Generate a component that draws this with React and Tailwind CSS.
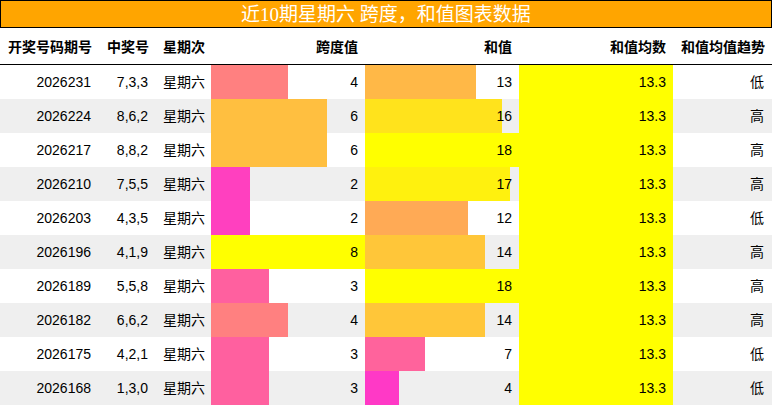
const rows = [
  ['2026231', '7,3,3', 4, 13, '低'],
  ['2026224', '8,6,2', 6, 16, '高'],
  ['2026217', '8,8,2', 6, 18, '高'],
  ['2026210', '7,5,5', 2, 17, '高'],
  ['2026203', '4,3,5', 2, 12, '低'],
  ['2026196', '4,1,9', 8, 14, '高'],
  ['2026189', '5,5,8', 3, 18, '高'],
  ['2026182', '6,6,2', 4, 14, '高'],
  ['2026175', '4,2,1', 3, 7, '低'],
  ['2026168', '1,3,0', 3, 4, '低'],
];

const avg = 13.3;

// magenta -> yellow depending on value / max
function barColor(ratio) {
  const g = Math.round(255 * ratio);
  const b = Math.round(255 * (1 - ratio));
  return `rgb(255, ${g}, ${b})`;
}

function BarCell({ value, max, label }) {
  const ratio = Math.min(value / max, 1);
  return (
    <div className="grid h-full">
      <div
        className="[grid-area:1/1] h-full"
        style={{ width: `${ratio * 100}%`, background: barColor(ratio) }}
      />
      <div className="[grid-area:1/1] flex items-center justify-end pr-[7px] relative">
        {label ?? value}
      </div>
    </div>
  );
}

export default function App() {
  const cols = 'grid grid-cols-[99px_56px_56px_154px_154px_154px_99px]';
  const maxSpan = Math.max(...rows.map((r) => r[2]));
  const maxSum = Math.max(...rows.map((r) => r[3]));

  return (
    <div
      className="w-[772px] h-[406px] bg-white text-black text-[14px] overflow-hidden"
      style={{ fontFamily: '"Liberation Sans", "Noto Sans CJK SC", sans-serif' }}
    >
      <div
        className="h-[28px] border border-black bg-[#ffa500] text-white text-[19px] flex items-center justify-center leading-none"
        style={{ fontFamily: '"Liberation Serif", "Noto Sans CJK SC", serif' }}
      >
        近10期星期六 跨度，和值图表数据
      </div>

      <div className={`${cols} h-[37px] pt-[3px] border-b border-black font-bold`}>
        <div className="flex items-center pl-[8px]">开奖号码期号</div>
        <div className="flex items-center pl-[8px]">中奖号</div>
        <div className="flex items-center pl-[8px]">星期次</div>
        <div className="flex items-center justify-end pr-[7px]">跨度值</div>
        <div className="flex items-center justify-end pr-[7px]">和值</div>
        <div className="flex items-center justify-end pr-[7px]">和值均数</div>
        <div className="flex items-center pl-[8px]">和值均值趋势</div>
      </div>

      {rows.map((r, i) => (
        <div
          key={r[0]}
          className={`${cols} h-[34px] ${i % 2 === 1 ? 'bg-[#efefef]' : 'bg-white'}`}
        >
          <div className="flex items-center justify-end pr-[8px]">{r[0]}</div>
          <div className="flex items-center justify-end pr-[7px]">{r[1]}</div>
          <div className="flex items-center pl-[8px]">星期六</div>
          <BarCell value={r[2]} max={maxSpan} />
          <BarCell value={r[3]} max={maxSum} />
          <BarCell value={avg} max={avg} label="13.3" />
          <div className="flex items-center justify-end pr-[8px]">{r[4]}</div>
        </div>
      ))}
    </div>
  );
}
